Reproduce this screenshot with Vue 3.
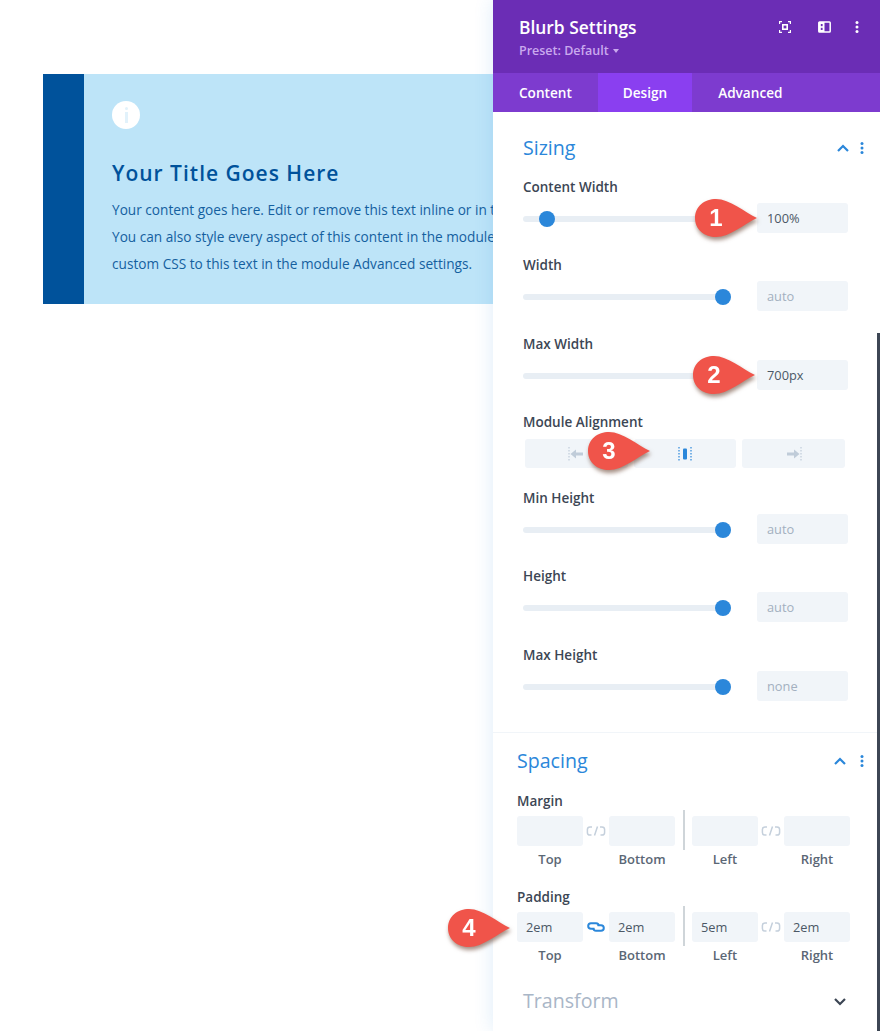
<script setup>
const tabs = ["Content", "Design", "Advanced"];

const sizingTop = [
  { label: "Content Width", value: "100%", pos: 24, filled: true },
  { label: "Width", value: "auto", pos: 200, filled: false },
  { label: "Max Width", value: "700px", pos: 200, filled: true },
];

const sizingBottom = [
  { label: "Min Height", value: "auto", pos: 200 },
  { label: "Height", value: "auto", pos: 200 },
  { label: "Max Height", value: "none", pos: 200 },
];

const spacing = [
  { label: "Margin", values: ["", "", "", ""], linked: false },
  { label: "Padding", values: ["2em", "2em", "5em", "2em"], linked: true },
];

const markers = [
  { n: 1, cls: "m1" },
  { n: 2, cls: "m2" },
  { n: 3, cls: "m3" },
  { n: 4, cls: "m4" },
];
</script>

<template>
  <div class="page">
    <section class="blurb">
      <div class="blurb-icon">
        <span class="i-dot"></span>
        <span class="i-bar"></span>
      </div>
      <h2 class="blurb-title">Your Title Goes Here</h2>
      <p class="blurb-text">Your content goes here. Edit or remove this text inline or in the module Content settings.</p>
      <p class="blurb-text">You can also style every aspect of this content in the module Design settings and even apply</p>
      <p class="blurb-text">custom CSS to this text in the module Advanced settings.</p>
    </section>

    <aside class="panel">
      <header class="panel-head">
        <div>
          <div class="panel-title">Blurb Settings</div>
          <div class="panel-preset">Preset: Default <span class="caret"></span></div>
        </div>
        <div class="head-icons">
          <svg class="focus-icon" width="12" height="12" viewBox="0 0 12 12" fill="none" stroke="#fff" stroke-width="1.2">
            <path d="M.6 3V.6H3M9 .6h2.4V3M11.4 9v2.4H9M3 11.4H.6V9" />
            <rect x="3.8" y="3.8" width="4.4" height="4.4" stroke-width="1.6" />
          </svg>
          <svg width="13" height="12" viewBox="0 0 13 12" fill="none">
            <rect x=".8" y="1" width="11.4" height="10" rx=".8" stroke="#fff" stroke-width="1.5" />
            <rect x="1" y="1" width="5.5" height="10" fill="#fff" />
            <rect x="2.8" y="3" width="1.8" height="2.2" fill="#6b2db5" />
            <rect x="2.8" y="6.8" width="1.8" height="2.2" fill="#6b2db5" />
          </svg>
          <svg width="4" height="12" viewBox="0 0 4 12" fill="#fff">
            <circle cx="2" cy="1.5" r="1.5" />
            <circle cx="2" cy="6" r="1.5" />
            <circle cx="2" cy="10.5" r="1.5" />
          </svg>
        </div>
      </header>

      <nav class="tabs">
        <div v-for="tab in tabs" :key="tab" :class="['tab', { active: tab === 'Design' }]">{{ tab }}</div>
      </nav>

      <div class="section sizing">
        <div class="section-head">
          <h3 class="section-title">Sizing</h3>
          <svg class="chev" width="14" height="9" viewBox="0 0 14 9" fill="none" stroke="#2b87da" stroke-width="2.2">
            <path d="M2 7l5-5 5 5" />
          </svg>
          <svg class="dots" width="4" height="12" viewBox="0 0 4 12" fill="#2b87da">
            <circle cx="2" cy="1.6" r="1.5" /><circle cx="2" cy="6" r="1.5" /><circle cx="2" cy="10.4" r="1.5" />
          </svg>
        </div>

        <div v-for="row in sizingTop" :key="row.label" class="row">
          <div class="label">{{ row.label }}</div>
          <div class="control">
            <div class="track">
              <span class="thumb" :style="{ left: row.pos + 'px' }"></span>
            </div>
            <div :class="['input', { muted: !row.filled }]">{{ row.value }}</div>
          </div>
        </div>

        <div class="row row-align">
          <div class="label">Module Alignment</div>
          <div class="align-group">
            <div class="align-btn">
              <svg width="16" height="16" viewBox="0 0 16 16" fill="#c0ccd9">
                <path d="M1 1v14" stroke="#c0ccd9" stroke-width="1.2" stroke-dasharray="1.5 1.5" />
                <path d="M2.5 8l5.5-4.5v3h7v3H8v3z" />
              </svg>
            </div>
            <div class="align-btn">
              <svg width="16" height="16" viewBox="0 0 16 16" fill="#2b87da">
                <path d="M2 1v14M14 1v14" stroke="#2b87da" stroke-width="1.2" stroke-dasharray="1.5 1.5" />
                <rect x="6" y="2.5" width="4" height="11" rx="1" />
              </svg>
            </div>
            <div class="align-btn">
              <svg width="16" height="16" viewBox="0 0 16 16" fill="#c0ccd9">
                <path d="M15 1v14" stroke="#c0ccd9" stroke-width="1.2" stroke-dasharray="1.5 1.5" />
                <path d="M13.5 8L8 3.5v3H1v3h7v3z" />
              </svg>
            </div>
          </div>
        </div>

        <div v-for="row in sizingBottom" :key="row.label" class="row">
          <div class="label">{{ row.label }}</div>
          <div class="control">
            <div class="track">
              <span class="thumb" :style="{ left: row.pos + 'px' }"></span>
            </div>
            <div class="input muted">{{ row.value }}</div>
          </div>
        </div>
      </div>

      <div class="section spacing">
        <div class="section-head">
          <h3 class="section-title">Spacing</h3>
          <svg class="chev" width="14" height="9" viewBox="0 0 14 9" fill="none" stroke="#2b87da" stroke-width="2.2">
            <path d="M2 7l5-5 5 5" />
          </svg>
          <svg class="dots" width="4" height="12" viewBox="0 0 4 12" fill="#2b87da">
            <circle cx="2" cy="1.6" r="1.5" /><circle cx="2" cy="6" r="1.5" /><circle cx="2" cy="10.4" r="1.5" />
          </svg>
        </div>

        <div v-for="group in spacing" :key="group.label" class="spacing-group">
          <div class="label">{{ group.label }}</div>
          <div class="quad">
            <div class="pair">
              <div class="cell">
                <div class="box">{{ group.values[0] }}</div>
                <div class="cap">Top</div>
              </div>
              <svg v-if="group.linked" class="link" width="20" height="12" viewBox="0 0 20 12" fill="none" stroke="#2b87da" stroke-width="2">
                <path d="M8.5 7.8H5a2.8 2.8 0 0 1 0-5.6h5a2.8 2.8 0 0 1 2.8 2.8" />
                <path d="M11.5 4.2H15a2.8 2.8 0 0 1 0 5.6h-5A2.8 2.8 0 0 1 7.2 7" />
              </svg>
              <svg v-else class="link" width="20" height="12" viewBox="0 0 20 12" fill="none" stroke="#c5d0dc" stroke-width="1.5">
                <path d="M6 2H4a2.6 2.6 0 0 0-2.6 2.6v2.8A2.6 2.6 0 0 0 4 10h1.5" />
                <path d="M14 2h2a2.6 2.6 0 0 1 2.6 2.6v2.8A2.6 2.6 0 0 1 16 10h-1.5" />
                <path d="M11.5 1.5L8.5 10.5" />
              </svg>
              <div class="cell">
                <div class="box">{{ group.values[1] }}</div>
                <div class="cap">Bottom</div>
              </div>
            </div>
            <div class="divider"></div>
            <div class="pair">
              <div class="cell">
                <div class="box">{{ group.values[2] }}</div>
                <div class="cap">Left</div>
              </div>
              <svg class="link" width="20" height="12" viewBox="0 0 20 12" fill="none" stroke="#c5d0dc" stroke-width="1.5">
                <path d="M6 2H4a2.6 2.6 0 0 0-2.6 2.6v2.8A2.6 2.6 0 0 0 4 10h1.5" />
                <path d="M14 2h2a2.6 2.6 0 0 1 2.6 2.6v2.8A2.6 2.6 0 0 1 16 10h-1.5" />
                <path d="M11.5 1.5L8.5 10.5" />
              </svg>
              <div class="cell">
                <div class="box">{{ group.values[3] }}</div>
                <div class="cap">Right</div>
              </div>
            </div>
          </div>
        </div>

        <div class="section-head transform">
          <h3 class="section-title muted-title">Transform</h3>
          <svg class="chev-down" width="14" height="9" viewBox="0 0 14 9" fill="none" stroke="#3c4654" stroke-width="2.2">
            <path d="M2 2l5 5 5-5" />
          </svg>
        </div>
      </div>

      <div class="scrollbar"></div>
    </aside>

    <div v-for="m in markers" :key="m.n" :class="['marker', m.cls]">
      <svg width="66" height="46" viewBox="0 0 66 46">
        <path d="M1 20C1 8 11 1 22 1C36 1 50 14 63 20C50 26 36 39 22 39C11 39 1 32 1 20Z" fill="#f0544a" />
      </svg>
      <span class="marker-num">{{ m.n }}</span>
    </div>
  </div>
</template>

<style scoped>
.page {
  position: relative;
  width: 880px;
  height: 1031px;
  overflow: hidden;
  background: #fff;
  font-family: "Open Sans", "Liberation Sans", sans-serif;
}

.blurb {
  box-sizing: border-box;
  width: 700px;
  height: 230px;
  margin: 74px 0 0 43px;
  position: absolute;
  padding: 27px 0 0 28px;
  background: #bde4f8;
  border-left: 41px solid #00529b;
}

.blurb-icon {
  position: relative;
  width: 28px;
  height: 28px;
  border-radius: 50%;
  background: #fff;
}

.i-dot {
  position: absolute;
  left: 12.5px;
  top: 6px;
  width: 3px;
  height: 3px;
  border-radius: 50%;
  background: #e2f2fb;
}

.i-bar {
  position: absolute;
  left: 12.5px;
  top: 11px;
  width: 3px;
  height: 11px;
  background: #e2f2fb;
}

.blurb-title {
  margin: 29px 0 0;
  font-size: 21px;
  line-height: 30px;
  font-weight: 600;
  letter-spacing: 1px;
  color: #00529b;
  white-space: nowrap;
}

.blurb-text {
  margin: 0;
  font-size: 13.65px;
  line-height: 27.2px;
  color: #14609f;
  white-space: nowrap;
}

.blurb-title + .blurb-text {
  margin-top: 8px;
}

.panel {
  position: absolute;
  top: 0;
  right: 0;
  bottom: 0;
  width: 387px;
  background: #fff;
  box-shadow: 0 0 18px rgba(43, 135, 218, 0.16);
}

.panel-head {
  display: flex;
  justify-content: space-between;
  height: 73px;
  box-sizing: border-box;
  padding: 15px 21px 0 26px;
  background: #6b2db5;
}

.panel-title {
  font-size: 17.4px;
  line-height: 24px;
  font-weight: 600;
  color: #fff;
}

.panel-preset {
  margin-top: 3px;
  font-size: 12.5px;
  line-height: 18px;
  font-weight: 600;
  color: #c9a9ee;
}

.caret {
  display: inline-block;
  margin-left: 1px;
  vertical-align: 2px;
  border-left: 3px solid transparent;
  border-right: 3px solid transparent;
  border-top: 4px solid #c9a9ee;
}

.head-icons {
  display: flex;
  align-items: center;
  gap: 24.5px;
  height: 24px;
}

.focus-icon {
  margin-right: 2px;
}

.tabs {
  display: flex;
  height: 39px;
  background: #7d3bcf;
}

.tab {
  padding: 0 26px;
  font-size: 13.6px;
  line-height: 39px;
  font-weight: 600;
  color: #fff;
}

.tab.active {
  padding: 0 25px;
  background: #8a3ff0;
}

.section-head {
  display: flex;
  align-items: center;
  height: 26px;
}

.section-title {
  flex: 1;
  margin: 0;
  font-size: 19.6px;
  line-height: 26px;
  font-weight: 400;
  color: #2b87da;
}

.chev {
  margin-right: 10px;
}

.sizing {
  box-sizing: border-box;
  height: 621px;
  padding: 23px 16px 0 30px;
  border-bottom: 1px solid #f1f5f9;
}

.sizing .section-head {
  margin-bottom: 16px;
}

.row {
  height: 56px;
  margin-bottom: 22.4px;
}

.row-align {
  height: 56px;
  margin-bottom: 19.6px;
}

.label {
  font-size: 13.5px;
  line-height: 20px;
  font-weight: 600;
  color: #3c4654;
}

.control {
  display: flex;
  align-items: center;
  justify-content: space-between;
  margin-top: 6px;
  padding-right: 16px;
}

.track {
  position: relative;
  width: 208px;
  height: 6px;
  margin-top: 2px;
  border-radius: 3px;
  background: #e8eef4;
}

.thumb {
  position: absolute;
  top: -5px;
  width: 16px;
  height: 16px;
  margin-left: -8px;
  border-radius: 50%;
  background: #2b87da;
}

.input {
  box-sizing: border-box;
  width: 91px;
  height: 30px;
  padding-left: 10px;
  border-radius: 3px;
  background: #f1f5f9;
  font-size: 12.8px;
  line-height: 30px;
  font-weight: 500;
  color: #4c5866;
}

.input.muted {
  color: #a3b0c0;
}

.align-group {
  display: flex;
  gap: 6px;
  margin: 7px 0 0 2px;
}

.align-btn {
  display: flex;
  align-items: center;
  justify-content: center;
  width: 102.7px;
  height: 29px;
  border-radius: 3px;
  background: #f1f5f9;
}

.spacing {
  padding: 15px 16px 0 24px;
}

.spacing .chev {
  margin-right: 13px;
}

.spacing .section-head {
  margin-bottom: 17px;
}

.spacing-group {
  height: 96px;
}

.quad {
  display: flex;
  gap: 7px;
  margin-top: 5px;
}

.pair {
  display: flex;
  align-items: flex-start;
}

.cell {
  width: 66px;
}

.box {
  box-sizing: border-box;
  height: 30px;
  padding-left: 9px;
  border-radius: 3px;
  background: #f1f5f9;
  font-size: 12.8px;
  line-height: 30px;
  font-weight: 500;
  color: #4c5866;
}

.cap {
  margin-top: 3px;
  text-align: center;
  font-size: 13px;
  line-height: 20px;
  font-weight: 600;
  color: #5b6775;
}

.link {
  flex: none;
  margin: 9px 0 0;
  width: 26px;
}

.divider {
  width: 2px;
  height: 40px;
  margin: -6px 0 0 1px;
  background: #cfd5d9;
}

.transform {
  margin-top: 5px;
  padding-left: 6px;
}

.muted-title {
  color: #a9b6c7;
}

.chev-down {
  margin-right: 17px;
}

.scrollbar {
  position: absolute;
  top: 333px;
  right: 0;
  bottom: 0;
  width: 3px;
  background: #3d4654;
}

.marker {
  position: absolute;
  width: 66px;
  height: 46px;
  filter: drop-shadow(1px 3px 2px rgba(90, 50, 30, 0.55));
}

.marker svg {
  display: block;
}

.marker-num {
  position: absolute;
  left: 0;
  top: 0;
  width: 44px;
  text-align: center;
  font-family: "Liberation Sans", Arial, sans-serif;
  font-size: 24px;
  line-height: 40px;
  font-weight: 700;
  color: #fff;
}

.m1 { left: 694px; top: 198px; }
.m2 { left: 692px; top: 355px; }
.m3 { left: 587px; top: 431px; }
.m4 { left: 447px; top: 908px; }
</style>
